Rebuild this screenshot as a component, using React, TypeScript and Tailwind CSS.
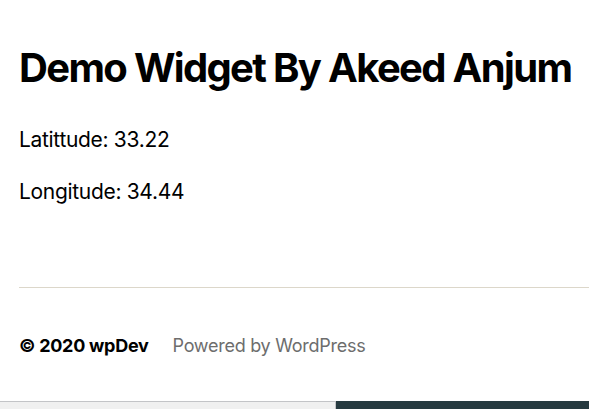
export default function App() {
  return (
    <div className="w-[589px] h-[409px] bg-white overflow-hidden flex flex-col" style={{ fontFamily: "Inter, 'Noto Sans', sans-serif" }}>
      <div className="px-[19px] pt-[43px]">
        <h1 className="text-[40px] leading-[50px] font-bold tracking-[-0.0415625em] text-black whitespace-nowrap">Demo Widget By Akeed Anjum</h1>
        <p className="mt-[31px] text-[21px] leading-[31px] tracking-[-0.015em] text-black">Latittude: 33.22</p>
        <p className="mt-[21px] text-[21px] leading-[31px] tracking-[-0.015em] text-black">Longitude: 34.44</p>
      </div>
      <div className="ml-[19px] mt-[80px] border-t border-[#dcd7ca]" />
      <div className="px-[19px] pt-[44px] flex items-center text-[18px] leading-[27px] tracking-[-0.015em]">
        <span className="font-bold text-black">© 2020 wpDev</span>
        <span className="ml-[24px] text-[#6d6d6d]">Powered by WordPress</span>
      </div>
      <div className="mt-auto flex h-[8px]">
        <div className="w-[336px] bg-[#f0f0f0] border-t border-r border-[#c3c4c7]" />
        <div className="flex-1 bg-[#263a40]" />
      </div>
    </div>
  );
}
